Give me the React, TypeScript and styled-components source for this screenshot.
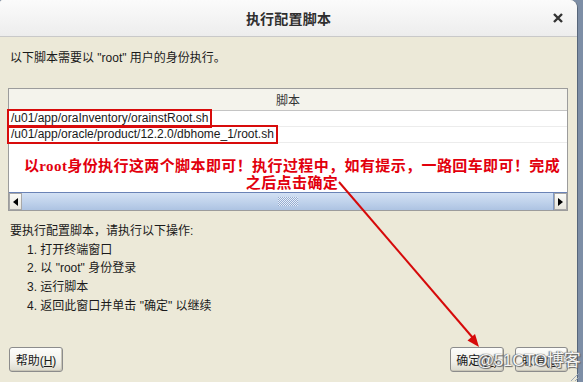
import React from 'react';
import styled, { createGlobalStyle } from 'styled-components';

const GlobalStyle = createGlobalStyle`
  body {
    margin: 0;
    background: #7d8ea6;
    font-family: "Liberation Sans", "Noto Sans CJK SC", sans-serif;
  }
`;

const Stage = styled.div`
  position: relative;
  width: 583px;
  height: 382px;
  overflow: hidden;
`;

const Window = styled.div`
  width: 578px;
  height: 382px;
  background: #ece9d8;
  border-top-right-radius: 8px;
  border-top-left-radius: 3px;
  border-right: 1px solid #56657a;
  box-sizing: border-box;
  display: flex;
  flex-direction: column;
  overflow: hidden;
`;

const TitleBar = styled.div`
  height: 37px;
  flex: none;
  box-sizing: border-box;
  background: linear-gradient(#fbfbfb, #ededed);
  border-bottom: 1px solid #c9c9c9;
  display: grid;
  grid-template-columns: 1fr auto 1fr;
  align-items: center;
`;

const Title = styled.div`
  grid-column: 2;
  font-size: 14px;
  font-weight: bold;
  color: #2e2e2e;
  letter-spacing: 0.2px;
`;

const CloseBox = styled.div`
  grid-column: 3;
  justify-self: end;
  margin-right: 13px;
  width: 12px;
  height: 12px;
  display: flex;
`;

const Body = styled.div`
  flex: 1;
  padding: 13px 9px 0 8px;
  font-size: 12px;
  color: #1a1a1a;
  display: flex;
  flex-direction: column;
`;

const Intro = styled.div`
  line-height: 16px;
  padding-left: 2px;
`;

const Table = styled.div`
  margin-top: 22px;
  border: 1px solid #9c9c9c;
  background: #fff;
  display: flex;
  flex-direction: column;
`;

const HeaderCell = styled.div`
  height: 21px;
  background: #f4f3ec;
  border-bottom: 1px solid #c4c4c4;
  display: flex;
  align-items: center;
  justify-content: center;
  color: #333;
`;

const Row = styled.div`
  height: 15px;
  border-bottom: 1px solid #ececec;
  display: flex;
  align-items: center;
`;

const Path = styled.span`
  padding: 0 2px 0 2px;
  line-height: 15px;
  outline: 2px solid #d80c0c;
  outline-offset: 0px;
`;

const Note = styled.div`
  height: 49px;
  padding-top: 15px;
  padding-left: 8px;
  box-sizing: border-box;
  text-align: center;
  font-family: "Liberation Serif", "Noto Sans CJK SC", serif;
  font-size: 15px;
  font-weight: bold;
  line-height: 17px;
  letter-spacing: 0.4px;
  color: #e2000d;
`;

const ScrollBar = styled.div`
  height: 17px;
  display: flex;
  border-top: 1px solid #6a83b6;
`;

const ArrowButton = styled.div`
  width: 13px;
  background: linear-gradient(#fbfbf7, #e7e5dc);
  border: 1px solid #a8a8a8;
  box-sizing: border-box;
  display: flex;
  align-items: center;
  justify-content: center;
`;

const Thumb = styled.div`
  flex: 1;
  background: linear-gradient(#d3e1f4, #bdd0ea 60%, #adc3e2);
  border-right: 1px solid #7f9ac6;
  display: flex;
  align-items: center;
  justify-content: center;
`;

const Grip = styled.div`
  width: 20px;
  height: 9px;
  background: repeating-conic-gradient(#eef3fb 0 25%, #8ea6cc 0 50%) 0 0 / 2px 2px;
  opacity: 0.85;
`;

const Steps = styled.div`
  margin-top: 11px;
  padding-left: 2px;
  line-height: 18.7px;
`;

const StepList = styled.ol`
  margin: 0;
  padding-left: 17px;
  list-style: none;
`;

const Footer = styled.div`
  margin-top: auto;
  padding: 0 9px 10px 9px;
  display: flex;
  justify-content: space-between;
`;

const ButtonGroup = styled.div`
  display: flex;
  gap: 11px;
`;

const Button = styled.button<{ $w: number }>`
  width: ${p => p.$w}px;
  height: 25px;
  padding: 0;
  font-family: "Liberation Sans", "Noto Sans CJK SC", sans-serif;
  font-size: 12px;
  color: #1a1a1a;
  background: linear-gradient(#fdfdfb, #f1f0ea 60%, #dcd9cc);
  border: 1px solid #8c8c8c;
  border-radius: 3px;
  box-shadow: inset -1px -1px 0 #c9c6b8;
`;

const Watermark = styled.div`
  position: absolute;
  left: 477px;
  top: 346px;
  font-family: "Liberation Sans", "Noto Sans CJK SC", sans-serif;
  font-size: 17px;
  letter-spacing: -0.3px;
  color: #f4f4f4;
  text-shadow: 0 0 1px #555, 1px 1px 1px #666, -1px 0 1px #777;
  pointer-events: none;
`;

const Overlay = styled.svg`
  position: absolute;
  left: 0;
  top: 0;
  pointer-events: none;
`;

const ResizeGrip = styled.svg`
  position: absolute;
  right: 3px;
  bottom: 0;
`;

const steps = ['1. 打开终端窗口', '2. 以 "root" 身份登录', '3. 运行脚本', '4. 返回此窗口并单击 "确定" 以继续'];

export default function App() {
  return (
    <Stage>
      <GlobalStyle />
      <Window>
        <TitleBar>
          <Title>执行配置脚本</Title>
          <CloseBox>
            <svg width="12" height="12" viewBox="0 0 12 12">
              <path d="M2 2 L10 10 M10 2 L2 10" stroke="#333" strokeWidth="2.4" />
            </svg>
          </CloseBox>
        </TitleBar>
        <Body>
          <Intro>以下脚本需要以 "root" 用户的身份执行。</Intro>
          <Table>
            <HeaderCell>脚本</HeaderCell>
            <Row>
              <Path>/u01/app/oraInventory/orainstRoot.sh</Path>
            </Row>
            <Row>
              <Path>/u01/app/oracle/product/12.2.0/dbhome_1/root.sh</Path>
            </Row>
            <Note>
              以root身份执行这两个脚本即可！执行过程中，如有提示，一路回车即可！完成
              <br />
              之后点击确定
            </Note>
            <ScrollBar>
              <ArrowButton>
                <svg width="5" height="8" viewBox="0 0 5 8">
                  <path d="M5 0 L0 4 L5 8 Z" fill="#000" />
                </svg>
              </ArrowButton>
              <Thumb>
                <Grip />
              </Thumb>
              <ArrowButton>
                <svg width="5" height="8" viewBox="0 0 5 8">
                  <path d="M0 0 L5 4 L0 8 Z" fill="#000" />
                </svg>
              </ArrowButton>
            </ScrollBar>
          </Table>
          <Steps>
            要执行配置脚本，请执行以下操作:
            <StepList>
              {steps.map(s => (
                <li key={s}>{s}</li>
              ))}
            </StepList>
          </Steps>
        </Body>
        <Footer>
          <Button $w={54}>
            帮助(<u>H</u>)
          </Button>
          <ButtonGroup>
            <Button $w={54}>
              确定(<u>O</u>)
            </Button>
            <Button $w={53}>
              取消(<u>C</u>)
            </Button>
          </ButtonGroup>
        </Footer>
      </Window>
      <Overlay width="583" height="382" viewBox="0 0 583 382">
        <line x1="339" y1="182" x2="473" y2="338" stroke="#d60a0a" strokeWidth="2" />
        <polygon points="479,347 467.5,340.5 475,334" fill="#d60a0a" />
      </Overlay>
      <ResizeGrip width="12" height="12" viewBox="0 0 12 12">
        <path d="M11 3 L3 11 M11 7 L7 11" stroke="#9aa6b5" strokeWidth="1" />
      </ResizeGrip>
      <Watermark>@51CTO博客</Watermark>
    </Stage>
  );
}
